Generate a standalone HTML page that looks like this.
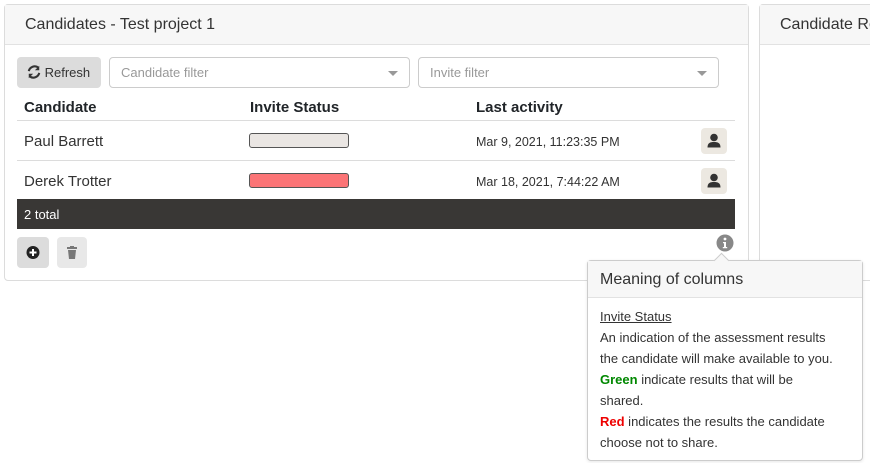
<!DOCTYPE html>
<html><head><style>
*{box-sizing:border-box;margin:0;padding:0}
body{width:870px;height:463px;background:#fff;font-family:"Liberation Sans",sans-serif;color:#212529;position:relative;overflow:hidden}
.card{position:absolute;border:1px solid #dcdcdc;border-radius:4px;background:#fff}
.hdr{height:40px;background:#f7f7f7;border-bottom:1px solid #e2e2e2;font-size:16px;padding:11px 0 0 20px;color:#333}
.abs{position:absolute}
.sel{position:absolute;height:31px;border:1px solid #ccc;border-radius:4px;font-size:13px;color:#999;padding:7px 0 0 11px}
.sel:after{content:"";position:absolute;right:11px;top:13px;border:5px solid transparent;border-top:5px solid #999;border-bottom:0}
.row{position:absolute;left:17px;width:718px;border-top:1px solid #dcdcdc}
.pill{position:absolute;left:249px;width:100px;height:15px;border:1px solid #555;border-radius:3px}
.ub{position:absolute;left:701px;width:26px;height:26px;background:#ece8e1;border-radius:4px}
</style></head><body>
<div class="card" style="left:4px;top:4px;width:745px;height:277px">
<div class="hdr">Candidates - Test project 1</div>
</div>
<div class="card" style="left:759px;top:4px;width:130px;height:277px">
<div class="hdr">Candidate Re</div>
</div>
<div class="abs" style="left:17px;top:57px;width:84px;height:31px;background:#dcdcdc;border-radius:4px;font-size:13px;padding:8px 0 0 10px;color:#333">
<svg width="14" height="14" viewBox="0 0 16 16" style="vertical-align:-2px"><path d="M13 3A7 7 0 0 0 2 7M3 13A7 7 0 0 0 14 9" stroke="#333" stroke-width="2.4" fill="none"/><path d="M14 1v5h-5zM2 15v-5h5z" fill="#333"/></svg> Refresh</div>
<div class="sel" style="left:109px;top:57px;width:301px">Candidate filter</div>
<div class="sel" style="left:418px;top:57px;width:301px">Invite filter</div>
<div class="abs" style="left:24px;top:99px;font-size:15px;font-weight:bold">Candidate</div>
<div class="abs" style="left:250px;top:99px;font-size:15px;font-weight:bold">Invite Status</div>
<div class="abs" style="left:476px;top:99px;font-size:15px;font-weight:bold">Last activity</div>
<div class="row" style="top:120px"></div>
<div class="row" style="top:160px"></div>
<div class="abs" style="left:24px;top:133px;font-size:15px;color:#333">Paul Barrett</div>
<div class="abs" style="left:24px;top:173px;font-size:15px;color:#333">Derek Trotter</div>
<div class="pill" style="top:133px;background:#eae6e3"></div>
<div class="pill" style="top:173px;background:#fb7476"></div>
<div class="abs" style="left:476px;top:135px;font-size:12.5px;color:#333">Mar 9, 2021, 11:23:35 PM</div>
<div class="abs" style="left:476px;top:175px;font-size:12.5px;color:#333">Mar 18, 2021, 7:44:22 AM</div>
<div class="ub" style="top:128px"><svg width="26" height="26" viewBox="0 0 26 26"><circle cx="13" cy="9.5" r="3.8" fill="#333"/><path d="M6.5 19.5c0-4.5 2.5-5.5 6.5-5.5s6.5 1 6.5 5.5z" fill="#333"/></svg></div>
<div class="ub" style="top:168px"><svg width="26" height="26" viewBox="0 0 26 26"><circle cx="13" cy="9.5" r="3.8" fill="#333"/><path d="M6.5 19.5c0-4.5 2.5-5.5 6.5-5.5s6.5 1 6.5 5.5z" fill="#333"/></svg></div>
<div class="abs" style="left:17px;top:199px;width:718px;height:30px;background:#393735;color:#fff;font-size:13px;padding:8px 0 0 7px">2 total</div>
<div class="abs" style="left:17px;top:237px;width:32px;height:31px;background:#dcdcdc;border-radius:4px"><svg width="32" height="31"><circle cx="16" cy="15.5" r="6.5" fill="#222"/><path d="M16 12v7M12.5 15.5h7" stroke="#fff" stroke-width="2"/></svg></div>
<div class="abs" style="left:57px;top:237px;width:30px;height:31px;background:#e8e8e8;border-radius:4px"><svg width="30" height="31"><rect x="10" y="10" width="10" height="2" fill="#777"/><rect x="13" y="9" width="4" height="2" fill="#777"/><path d="M11 13h8l-1 9h-6z" fill="#777"/></svg></div>
<svg class="abs" style="left:716px;top:234px" width="18" height="18"><circle cx="9" cy="9" r="8.5" fill="#888"/><circle cx="9" cy="5" r="1.4" fill="#fff"/><path d="M7 8h3v5h1.2v1.3H6.8V13H8V9.3H7z" fill="#fff"/></svg>
<div class="abs" style="left:587px;top:260px;width:276px;height:201px;border:1px solid #ccc;border-radius:4px;background:#fff;box-shadow:0 1px 3px rgba(0,0,0,.1)">
<div style="height:37px;background:#f7f7f7;border-bottom:1px solid #e2e2e2;font-size:16px;padding:10px 0 0 12px;color:#333">Meaning of columns</div>
<div style="padding:8px 0 0 12px;width:250px;font-size:13px;line-height:21px;color:#333">
<span style="text-decoration:underline">Invite Status</span><br>An indication of the assessment results the candidate will make available to you.<br><b style="color:#080">Green</b> indicate results that will be shared.<br><b style="color:#e00">Red</b> indicates the results the candidate choose not to share.</div>
</div>
<div class="abs" style="left:716px;top:255px;width:11px;height:11px;background:#f7f7f7;border-left:1px solid #ccc;border-top:1px solid #ccc;transform:rotate(45deg)"></div>
</body></html>
